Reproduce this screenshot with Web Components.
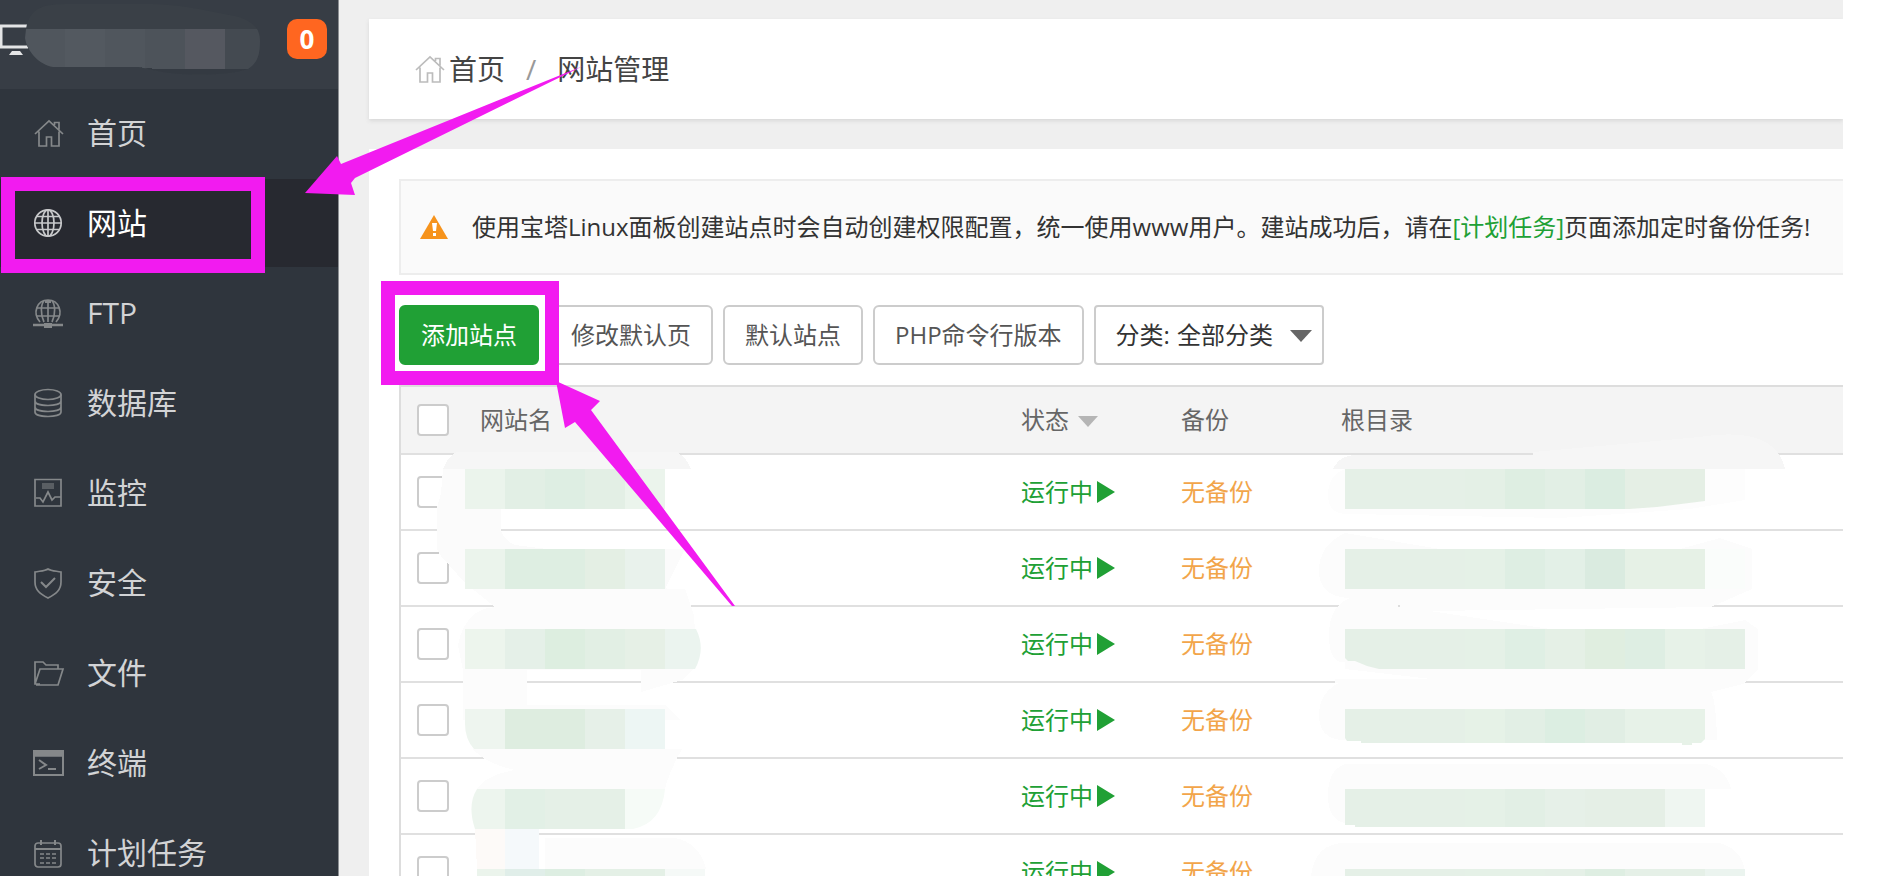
<!DOCTYPE html>
<html lang="zh-CN">
<head>
<meta charset="utf-8">
<title>网站管理</title>
<style>
  body { margin: 0; background: #fff; color: #444; font-family: "Open Sans", "Noto Sans CJK SC", sans-serif; font-size: 24px; line-height: 32px; }
</style>
</head>
<body>
<panel-app></panel-app>
<script>
const ICONS = {
  home: '<path d="M2 17 16 4 30 17M6 14.500V29h7.500V20h5v9H26V14.500M21.500 8V5.500H26v7"/>',
  globe: '<circle cx="15" cy="16" r="13.200"/><ellipse cx="15" cy="16" rx="6" ry="13.200"/><path d="M15 3v26M2 16h26M4 9.500h22M4 22.500h22"/>',
  ftp: '<path d="M7 25C-1 16 4 3 15 3s16 13 8 22"/><path d="M11 25C7 17 8 7 11 4M19 25c4-8 3-18 0-21M15 3v22M4 11h22M3 19h24"/><path d="M0 28h30" stroke-width="2.500"/><path d="M11 26h8v5h-8zM12 3h6v3h-6z" fill="currentColor" stroke="none"/>',
  data: '<ellipse cx="15" cy="7.500" rx="13" ry="5"/><path d="M2 7.500V25c0 6 26 6 26 0V7.500M2 14c0 6 26 6 26 0M2 20c0 6 26 6 26 0"/>',
  monitor: '<path d="M2 2.500h26v26.500H2z"/><path d="M9 7h12M9 9h12M9 11h12" stroke-width="1"/><path d="M3 21h4l3 4 5-10 4 8 3-3h6"/>',
  shield: '<path d="M15 2c-3 2-8 2-13 3v10c0 8 5 12 13 16 8-4 13-8 13-16V5c-5-1-10-1-13-3z"/><path d="m8 15 5 5 9-9" stroke-width="2"/>',
  folder: '<path d="M7 27H2V5h8l3 3h12v4M2 27 7 12h23l-5 16H3"/>',
  terminal: '<path d="M1 4h29v24H1z" stroke-width="2"/><path d="M1 4h29v5H1z" fill="currentColor"/><path d="m6 13 7 5-7 4M15 22h8" stroke-width="2"/>',
  calendar: '<rect x="2" y="6" width="26" height="24" rx="3"/><path d="M2 12h26M8 3v5M22 3v5" stroke-width="2"/><path d="M7 17h17M7 21h17M7 26h17" stroke-dasharray="4 2"/>'
};
const svgIcon = name => `<svg viewBox="0 0 32 32" width="32" height="32" fill="none" stroke="currentColor" stroke-width="1.700" aria-hidden="true">${ICONS[name]}</svg>`;

function define(name, render) {
  customElements.define(name, class extends HTMLElement {
    constructor() {
      super();
      this.attachShadow({ mode: 'open' });
    }
    connectedCallback() { this.shadowRoot.innerHTML = render(this); }
  });
}

define('nav-item', el => `
<style>
  :host { display: block; border-bottom: 2px solid #2f353d; }
  a { display: flex; align-items: center; gap: 22px; height: 88px; padding-left: 33px; color: #d2d3d5; text-decoration: none; font-size: 30px; line-height: 40px; }
  svg { color: #85888a; flex: none; }
  :host([active]) a { background: #272930; color: #fff; }
  :host([active]) svg { color: #c8c9cb; }
</style>
<a href="#${el.getAttribute('icon')}">${svgIcon(el.getAttribute('icon'))}<slot></slot></a>`);

define('side-bar', () => `
<style>
  :host { display: flex; flex-direction: column; flex: none; width: 338px; background: #2f353d; border-right: 1px solid #8c8f93; }
  header { display: flex; flex: none; align-items: center; justify-content: space-between; height: 78px; padding-right: 11px; padding-bottom: 11px; background: #373d45; }
  b { width: 40px; height: 40px; border-radius: 10px; background: #ff6620; color: #fff; text-align: center; line-height: 40px; font-size: 26px; }
</style>
<header>
  <svg width="28" height="36" fill="none" stroke="#e4e5e6" aria-hidden="true"><path d="M28 5H1v21h27" stroke-width="3"/><path d="M9 34h14l-3-4h-8z" fill="#e4e5e6" stroke="none"/></svg>
  <b>0</b>
</header>
<nav><slot></slot></nav>`);

define('bread-crumb', () => `
<style>
  :host { display: flex; flex: none; align-items: center; height: 100px; padding: 0 45px; background: #fff; box-shadow: 0 2px 4px #d8d8d8; font-size: 28px; line-height: 40px; }
  a { display: flex; align-items: center; gap: 3px; color: #444; text-decoration: none; }
  svg { color: #bcbcbc; }
  i { padding: 0 21px; color: #999; font-style: normal; }
</style>
<a href="#home">${svgIcon('home')}首页</a><i>/</i><span>网站管理</span>`);

define('notice-bar', () => `
<style>
  :host { display: flex; align-items: center; gap: 23px; height: 92px; padding: 0 18px; border: solid #ededed; border-width: 2px 0 2px 2px; background: #fafafa; color: #333; white-space: nowrap; }
  p { margin: 0; }
  svg { flex: none; }
</style>
<svg width="30" height="26" aria-hidden="true"><path d="M15 1 29 25H1z" fill="#f6931c"/><path d="M13 9h5l-1 8h-3zM14 19h3v3h-3z" fill="#fff"/></svg>
<p><slot></slot></p>`);

define('tool-button', el => `
<style>
  :host { display: block; }
  button { box-sizing: border-box; height: 60px; padding: 0 20px; border: 2px solid #ccc; border-radius: 6px; background: #fff; color: #555; font: inherit; white-space: nowrap; }
  :host([primary]) button { border-color: #20a035; background: #20a035; color: #fff; }
</style>
<button type="button"><slot></slot></button>`);

define('category-select', () => `
<style>
  :host { display: flex; align-items: center; position: relative; box-sizing: border-box; width: 230px; height: 60px; padding-left: 20px; gap: 7px; border: 2px solid #ccc; border-radius: 4px; background: #fff; color: #333; white-space: nowrap; }
  select { appearance: none; flex: 1; min-width: 0; height: 56px; padding: 0; border: 0; background: none; color: inherit; font: inherit; }
  svg { position: absolute; right: 9px; top: 22px; pointer-events: none; }
</style>
<label for="cat">分类:</label>
<select id="cat"><option>全部分类</option></select>
<svg width="24" height="14" aria-hidden="true"><path d="M1 1h22L12 13z" fill="#666"/></svg>`);

define('site-table', () => {
  const row = n => `<tr><td><input type="checkbox" aria-label="选择站点 ${n}"></td><td></td><td><a class="run" href="#status">运行中<svg width="20" height="24" aria-hidden="true"><path d="M1 1v22l18-11z" fill="#20a035"/></svg></a></td><td><a class="none" href="#backup">无备份</a></td><td></td></tr>`;
  return `
<style>
  :host { display: block; }
  table { width: 100%; table-layout: fixed; border-collapse: separate; border-spacing: 0; border: solid #ddd; border-width: 2px 0 0 2px; }
  th, td { box-sizing: border-box; padding: 0 0 0 16px; border-bottom: 2px solid #e0e0e0; text-align: left; font-weight: 400; white-space: nowrap; }
  th { height: 68px; background: #f4f4f4; color: #666; }
  td { height: 76px; }
  .pick { width: 63px; } .name { width: 541px; } .col { width: 160px; }
  input { appearance: none; display: block; box-sizing: border-box; width: 32px; height: 32px; margin: 0; border: 2px solid #ccc; border-radius: 4px; background: #fff; }
  th svg { margin-left: 8px; vertical-align: 2px; }
  a { text-decoration: none; }
  .run { display: flex; align-items: center; gap: 3px; color: #20a035; }
  .none { color: #f2a54a; }
</style>
<table>
  <thead><tr><th class="pick"><input type="checkbox" aria-label="全选"></th><th class="name">网站名</th><th class="col">状态<svg width="22" height="12" aria-hidden="true"><path d="M1 1h20L11 12z" fill="#b5b5b5"/></svg></th><th class="col">备份</th><th>根目录</th></tr></thead>
  <tbody>${[1, 2, 3, 4, 5, 6].map(row).join('')}</tbody>
</table>`;
});

/* Pixelated strips over private data: start x, y, height, then cell widths and colours. */
const strip = (x, y, h, cells) => {
  let out = '';
  for (const [w, c] of cells) { out += `<rect x="${x}" y="${y}" width="${w}" height="${h}" fill="${c}"/>`; x += w; }
  return out;
};
define('privacy-mask', () => `
<style>
  :host { position: absolute; left: 0; top: 0; pointer-events: none; }
  svg { display: block; }
</style>
<svg width="1843" height="876" shape-rendering="crispEdges" aria-hidden="true">
  <defs>
    <clipPath id="top"><path d="M26 29C30 6 45 4 70 4h75c40 0 60 7 90 12 18 5 25 12 25 25 0 16-4 23-12 28-20 7-70 7-90 2l-20-4H53C40 65 27 52 25 38z"/></clipPath>
    <clipPath id="l3"><path d="M465 629H696q10 20-1 40H465z"/></clipPath>
    <clipPath id="l4"><path d="M465 709h200v40H474q-9-10-9-25z"/></clipPath>
    <clipPath id="l5"><path d="M477 789h188q-3 34-32 40H475q-8-24 2-40z"/></clipPath>
    <clipPath id="r1"><path d="M1345 469h360v32l-24 3-24 3-28 2h-284z"/></clipPath>
    <clipPath id="r3"><path d="M1345 629h400v40h-366l-12-3-12-5h-7l-3-3z"/></clipPath>
    <clipPath id="r4"><path d="M1345 709h360v30l-4 4h-9v2h-10v-2h-321v-2h-14l-2-3z"/></clipPath>
    <clipPath id="r5"><path d="M1345 789h360v38h-350v-2h-10z"/></clipPath>
  </defs>
  <g clip-path="url(#top)">
    <rect x="20" width="250" height="80" fill="#3a4047"/>
    ${strip(25, 29, 40, [[40, '#50565d'], [40, '#535960'], [40, '#50565d'], [40, '#4d535a'], [40, '#555860'], [40, '#444a51']])}
    <path d="M53 67h84l20 2h100v11H53z" fill="#343a42"/>
  </g>
  <path d="M457 452Q448 456 443 469H691Q687 458 677 452z" fill="#f6f6f6"/>
  <path d="M443 469h22v40h36v22q4 10 14 14l32 4H685l-20 40h-190l-10-6-16-18q-12-12-12-17v-40l4-15z" fill="#fbfbfb"/>
  <path d="M465 583 495 607Q465 609 458 645L463 670V720H680L665 705H527V670H641V692L682 680 697 665 694 615 685 589z" fill="#fcfcfc"/>
  <path d="M473 749H682Q669 772 665 789H477Q486 775 515 770 486 764 473 749z" fill="#fcfcfc"/>
  <path d="M475 829h30v40h-28z" fill="#fdfaf8"/><path d="M505 829h34v40h-34z" fill="#f5f9fb"/><path d="M545 838h130q25 5 31 31H545z" fill="#fcfcfc"/>
  ${strip(465, 469, 40, [[40, '#ebf4ec'], [40, '#e2efe5'], [40, '#deeee3'], [40, '#e3efe5'], [40, '#ebf4ec']])}
  ${strip(465, 549, 40, [[40, '#ebf4ec'], [80, '#deeee2'], [40, '#e4efe4'], [40, '#e9f2ec']])}
  <g clip-path="url(#l3)">${strip(465, 629, 40, [[40, '#edf5ed'], [40, '#e5f0e8'], [40, '#ddeee0'], [40, '#e2efe4'], [40, '#e6f0e6'], [40, '#ebf4ef']])}</g>
  <g clip-path="url(#l4)">${strip(465, 709, 40, [[40, '#eef5ef'], [80, '#deede0'], [40, '#e6f0e8'], [40, '#edf6f4']])}</g>
  <g clip-path="url(#l5)">${strip(465, 789, 40, [[40, '#edf5ee'], [40, '#e2f0e6'], [80, '#e5f0e7'], [40, '#f6fbf7']])}</g>
  ${strip(477, 869, 7, [[28, '#ebf4ec'], [40, '#e0eee9'], [40, '#ddeee2'], [80, '#e4f0e6'], [40, '#f5f9f7']])}

  <path d="M1345 469Q1328 475 1328 495T1350 514L1560 518 1690 509 1745 500V469z" fill="#fdfdfd"/>
  <path d="M1333 469Q1340 455 1356 455H1533V452L1600 446 1700 437Q1775 425 1785 469z" fill="#f6f6f6"/>
  <path d="M1345 533Q1319 545 1319 571T1350 598Q1329 606 1329 635T1345 662V669L1440 680H1345Q1319 690 1319 715T1345 740H1717Q1716 700 1711 692L1743 684 1758 669V629L1745 620 1700 629H1550L1430 611 1711 607 1752 589V549L1720 538 1680 549H1440z" fill="#fcfcfc"/>
  <path d="M1341 603h370v4h-370zM1335 679h408v4h-408z" fill="#fcfcfc"/>
  <path d="M1345 764q-17 6-17 31t17 28V789h386q-5-20-25-25zM1345 843q-30 0-34 33h434q0-25-25-33z" fill="#fcfcfc"/>
  <path d="M1398 605h2v2h-2z" fill="#ddd"/>
  <g clip-path="url(#r1)">${strip(1345, 469, 40, [[120, '#e5f0e7'], [40, '#e4f0e6'], [40, '#deeee2'], [40, '#e2efe5'], [40, '#dbede1'], [80, '#e5efe5']])}</g>
  ${strip(1345, 549, 40, [[120, '#e5f0e7'], [40, '#e5f1e7'], [40, '#deeee3'], [40, '#e3f0e7'], [40, '#daebe0'], [80, '#e6f1e6'], [40, '#fafdfb']])}
  <g clip-path="url(#r3)">${strip(1345, 629, 40, [[120, '#e5f0e7'], [40, '#e5f1e7'], [40, '#dfefe4'], [40, '#e5f0e6'], [40, '#e0eee0'], [40, '#deeee3'], [40, '#e7f2e8'], [40, '#e5f0e7']])}</g>
  <g clip-path="url(#r4)">${strip(1345, 709, 40, [[120, '#e5f0e7'], [40, '#e6f2e7'], [40, '#e2efe5'], [40, '#dceee2'], [40, '#e1eee4'], [80, '#e7f2e8']])}</g>
  <g clip-path="url(#r5)">${strip(1345, 789, 40, [[120, '#e5f0e7'], [40, '#e5f1e7'], [40, '#e2efe5'], [40, '#e6f0e8'], [80, '#e5efe6'], [40, '#eff6f1']])}</g>
  ${strip(1345, 869, 7, [[120, '#e5f0e7'], [80, '#e5f1e7'], [40, '#e5f0e7'], [40, '#deeee2'], [80, '#e5f0e7'], [40, '#ebf4ef']])}
</svg>`);

define('guide-marks', () => `
<style>
  :host { position: absolute; left: 0; top: 0; pointer-events: none; }
  svg { display: block; }
</style>
<svg width="760" height="620" fill="#f21bf0" aria-hidden="true">
  <path d="M8 184h250v82H8zM388 288h164v90H388z" fill="none" stroke="#f21bf0" stroke-width="14"/>
  <path d="M305 193 337 156 341 164 583 66 355 178 351 183 355 195z"/>
  <path d="M556 381 600 401 591 410 735 606H732L575 422 565 428z"/>
</svg>`);

define('panel-app', () => `
<style>
  :host { display: flex; position: relative; height: 100vh; overflow: hidden; padding-right: 43px; }
  main { display: flex; flex-direction: column; flex: 1; min-width: 0; padding: 19px 0 0 30px; gap: 30px; background: #efefef; overflow: hidden; }
  section { flex: 1 0 auto; padding: 30px 0 0 30px; background: #fff; }
  .tools { display: flex; gap: 10px; padding: 30px 0 20px; }
  notice-bar a { color: #20a035; text-decoration: none; }
</style>
<side-bar>
  <nav-item icon="home">首页</nav-item>
  <nav-item icon="globe" active>网站</nav-item>
  <nav-item icon="ftp">FTP</nav-item>
  <nav-item icon="data">数据库</nav-item>
  <nav-item icon="monitor">监控</nav-item>
  <nav-item icon="shield">安全</nav-item>
  <nav-item icon="folder">文件</nav-item>
  <nav-item icon="terminal">终端</nav-item>
  <nav-item icon="calendar">计划任务</nav-item>
</side-bar>
<main>
  <bread-crumb></bread-crumb>
  <section>
    <notice-bar>使用宝塔Linux面板创建站点时会自动创建权限配置，统一使用www用户。建站成功后，请在<a href="#calendar">[计划任务]</a>页面添加定时备份任务!</notice-bar>
    <div class="tools">
      <tool-button primary>添加站点</tool-button>
      <tool-button>修改默认页</tool-button>
      <tool-button>默认站点</tool-button>
      <tool-button>PHP命令行版本</tool-button>
      <category-select></category-select>
    </div>
    <site-table></site-table>
  </section>
</main>
<privacy-mask></privacy-mask>
<guide-marks></guide-marks>`);
</script>
</body>
</html>
